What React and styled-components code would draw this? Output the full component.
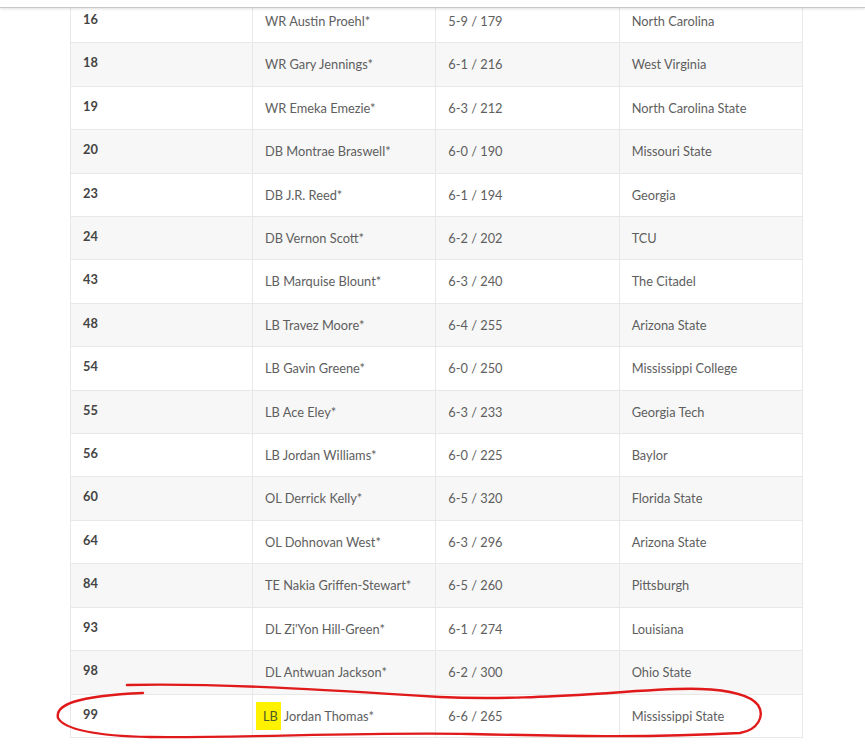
import React from 'react';
import styled, { createGlobalStyle } from 'styled-components';

const GlobalStyle = createGlobalStyle`
    html, body {
        margin: 0;
        padding: 0;
        background: #fff;
    }
    body {
        font-family: Lato, "Open Sans", Arial, sans-serif;
        overflow: hidden;
    }
`;

const roster = [
    ['16', 'WR', 'Austin Proehl*', '5-9 / 179', 'North Carolina'],
    ['18', 'WR', 'Gary Jennings*', '6-1 / 216', 'West Virginia'],
    ['19', 'WR', 'Emeka Emezie*', '6-3 / 212', 'North Carolina State'],
    ['20', 'DB', 'Montrae Braswell*', '6-0 / 190', 'Missouri State'],
    ['23', 'DB', 'J.R. Reed*', '6-1 / 194', 'Georgia'],
    ['24', 'DB', 'Vernon Scott*', '6-2 / 202', 'TCU'],
    ['43', 'LB', 'Marquise Blount*', '6-3 / 240', 'The Citadel'],
    ['48', 'LB', 'Travez Moore*', '6-4 / 255', 'Arizona State'],
    ['54', 'LB', 'Gavin Greene*', '6-0 / 250', 'Mississippi College'],
    ['55', 'LB', 'Ace Eley*', '6-3 / 233', 'Georgia Tech'],
    ['56', 'LB', 'Jordan Williams*', '6-0 / 225', 'Baylor'],
    ['60', 'OL', 'Derrick Kelly*', '6-5 / 320', 'Florida State'],
    ['64', 'OL', 'Dohnovan West*', '6-3 / 296', 'Arizona State'],
    ['84', 'TE', 'Nakia Griffen-Stewart*', '6-5 / 260', 'Pittsburgh'],
    ['93', 'DL', "Zi'Yon Hill-Green*", '6-1 / 274', 'Louisiana'],
    ['98', 'DL', 'Antwuan Jackson*', '6-2 / 300', 'Ohio State'],
    ['99', 'LB', 'Jordan Thomas*', '6-6 / 265', 'Mississippi State', true],
];

const App = () => {
    return (
        <Page>
            <GlobalStyle />
            <TopBar />
            <RosterTable>
                <tbody>
                    {roster.map(([num, pos, name, size, school, marked], i) => (
                        <Row key={num} $striped={i % 2 === 1}>
                            <NumCell>{num}</NumCell>
                            <Cell>
                                {marked ? <Highlight>{pos}</Highlight> : pos + ' '}
                                {name}
                            </Cell>
                            <Cell>{size}</Cell>
                            <Cell>{school}</Cell>
                        </Row>
                    ))}
                </tbody>
            </RosterTable>
            <Scribble width="865" height="750" viewBox="0 0 865 750">
                <path
                    d="M127 685 C 220 683, 330 690, 440 697 C 500 700, 560 696, 610 693 C 650 690, 680 688, 700 689 C 730 690, 750 695, 758 705 C 765 716, 758 730, 740 733 C 650 738, 560 736, 470 734 C 360 732, 250 738, 150 737 C 100 736, 65 730, 58 718 C 55 705, 75 696, 143 693"
                    fill="none"
                    stroke="#e0191b"
                    strokeWidth="2.4"
                    strokeLinecap="round"
                    strokeLinejoin="round"
                />
            </Scribble>
        </Page>
    );
};

const Page = styled.div`
    position: relative;
    width: 865px;
    height: 750px;
    overflow: hidden;
`;

const TopBar = styled.div`
    position: absolute;
    top: 0;
    left: 0;
    right: 0;
    height: 7px;
    background: #fff;
    border-bottom: 1.5px solid #c9c9c9;
    box-shadow: 0 1px 3px rgba(0, 0, 0, 0.12);
    z-index: 2;
`;

const RosterTable = styled.table`
    margin: -1px 0 0 70px;
    width: 733px;
    border-collapse: collapse;
    table-layout: fixed;
    font-size: 12.8px;
    color: #5e5e5e;
`;

const Row = styled.tr`
    background: ${({ $striped }) => ($striped ? '#f7f7f7' : '#fff')};
`;

const Cell = styled.td`
    border: 1px solid #e8e8e8;
    padding: 12px 12px;
    line-height: 18.4px;
    height: 18.4px;
    vertical-align: middle;
    white-space: nowrap;
`;

const NumCell = styled(Cell)`
    width: 157px;
    font-weight: 700;
    color: #444;
    padding-bottom: 14px;
    padding-top: 10px;
`;

const Highlight = styled.span`
    margin-left: -9px;
    margin-right: 3px;
    padding: 6px 3px 6px 7px;
    background: #fff200;
    color: #4a5a2a;
`;

const Scribble = styled.svg`
    position: absolute;
    top: 0;
    left: 0;
    pointer-events: none;
    z-index: 3;
`;

export default App;
